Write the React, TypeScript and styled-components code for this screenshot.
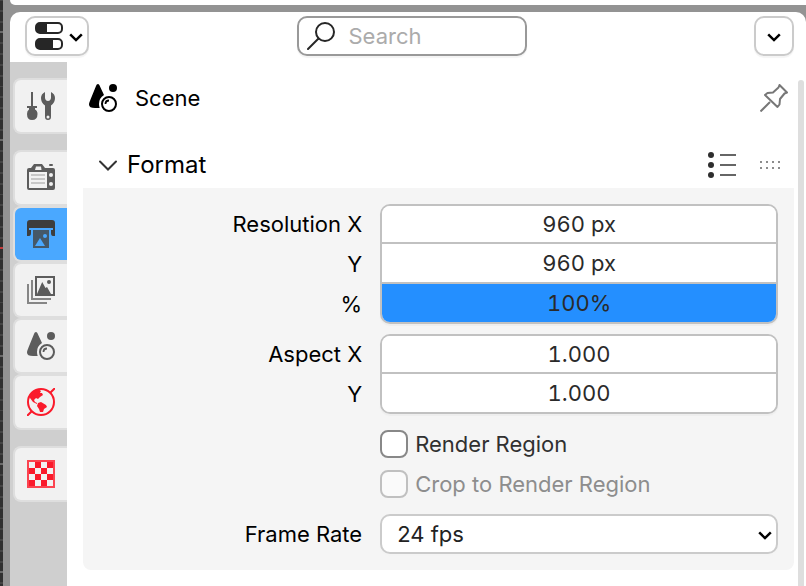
import React from "react";
import styled, { createGlobalStyle, css } from "styled-components";

const GlobalStyle = createGlobalStyle`
  *, *::before, *::after { box-sizing: border-box; }
  html, body, #root { height: 100%; }
  body {
    margin: 0;
    overflow: hidden;
    background: #939393;
    color: #000;
    font-family: Inter, "Liberation Sans", sans-serif;
    font-size: 22px;
    line-height: 28px;
  }
  button, input, select { font: inherit; color: inherit; margin: 0; }
  svg { display: block; flex: none; }
`;

const Workspace = styled.div`
  display: flex;
  height: 100vh;
`;

const Viewport = styled.div`
  flex: none;
  width: 3px;
  background:
    linear-gradient(#c23a3a, #c23a3a) 0 247px / 3px 2px no-repeat,
    repeating-linear-gradient(transparent 0 31px, #6a6a6a 31px 33px, transparent 33px 108px),
    repeating-linear-gradient(
      #444 0 1px, #303030 1px 10px, #444 10px 12px, #303030 12px 21px, #444 21px 23px,
      #303030 23px 32px, #444 32px 33px, #303030 33px 42px, #444 42px 44px, #303030 44px 53px, #444 53px 54px
    );
`;

const Areas = styled.div`
  flex: 1;
  min-width: 0;
  display: flex;
  flex-direction: column;
  gap: 7px;
  padding-left: 7px;
`;

const UpperArea = styled.div`
  flex: none;
  height: 5px;
  background: #fff;
  border-bottom-left-radius: 10px;
`;

const Editor = styled.main`
  flex: 1;
  min-height: 0;
  display: flex;
  flex-direction: column;
  background: #fff;
  border-radius: 10px 10px 0 0;
  overflow: hidden;
`;

const Header = styled.header`
  flex: none;
  display: flex;
  justify-content: space-between;
  align-items: center;
  height: 50px;
  padding: 4px 12px 6px 15px;
`;

const framed = css`
  height: 40px;
  border: 2px solid #cbcbcb;
  border-radius: 10px;
  background: #fff;
  box-shadow: 0 2px 1px #f4f4f4;
`;

const HeaderButton = styled.button<{ $wide?: boolean }>`
  ${framed}
  display: flex;
  align-items: center;
  justify-content: ${(p) => (p.$wide ? "space-between" : "center")};
  width: ${(p) => (p.$wide ? 64 : 40)}px;
  padding: ${(p) => (p.$wide ? "0 4px 0 8px" : "0")};
`;

const SearchBox = styled.label`
  ${framed}
  border-color: #999;
  display: flex;
  align-items: center;
  gap: 14px;
  width: 230px;
  margin-right: 20px;
  padding: 0 8px;
`;

const SearchInput = styled.input`
  flex: 1;
  min-width: 0;
  padding: 0;
  border: 0;
  outline: 0;
  background: none;
  &::placeholder { color: #ababab; opacity: 1; }
`;

const Columns = styled.div`
  flex: 1;
  min-height: 0;
  display: flex;
`;

const TabStrip = styled.nav`
  flex: none;
  display: flex;
  flex-direction: column;
  gap: 16px;
  width: 57px;
  padding: 16px 0 0 3px;
  background: #cfcfcf;
`;

const TabGroup = styled.div`
  display: flex;
  flex-direction: column;
`;

const Tab = styled.button<{ $active?: boolean; $accent?: boolean }>`
  display: flex;
  align-items: center;
  height: 56px;
  padding: 0 0 0 12px;
  border: 2px solid #dedede;
  border-right: 0;
  border-radius: 8px 0 0 8px;
  background: ${(p) => (p.$active ? "#4aa8ff" : "#f1f1f1")};
  color: ${(p) => (p.$accent ? "#fa1a2b" : p.$active ? "#3d3d3d" : "#5c5c5c")};
`;

const Content = styled.section`
  flex: 1;
  min-width: 0;
  padding: 16px 3px 16px 16px;
`;

const Context = styled.div`
  display: flex;
  align-items: center;
  height: 40px;
  padding: 0 6px;
`;

const ContextName = styled.span`
  flex: 1;
  margin-left: 18px;
`;

const IconButton = styled.button`
  display: flex;
  padding: 0;
  border: 0;
  background: none;
`;

const PanelHeader = styled.div`
  display: flex;
  align-items: center;
  gap: 21px;
  height: 46px;
  margin-top: 24px;
  padding: 0 12px 0 15px;
  font-size: 24px;
`;

const PanelToggle = styled.button`
  flex: 1;
  display: flex;
  align-items: center;
  gap: 9px;
  padding: 0;
  border: 0;
  background: none;
  text-align: left;
`;

const PanelBody = styled.div`
  display: flex;
  flex-direction: column;
  padding: 16px;
  border-radius: 0 0 8px 8px;
  background: #f5f5f5;
`;

const Row = styled.div`
  display: grid;
  grid-template-columns: 2fr 3fr;
  column-gap: 16px;
  align-items: center;
`;

const Group = styled(Row)`
  margin-bottom: 10px;
`;

const Labels = styled.div`
  display: flex;
  flex-direction: column;
`;

const FieldLabel = styled.label`
  height: 40px;
  padding-right: 2px;
  line-height: 40px;
  text-align: right;
`;

const FieldStack = styled.div`
  display: flex;
  flex-direction: column;
  border: 2px solid #c1c1c1;
  border-radius: 10px;
  overflow: hidden;
  box-shadow: 0 2px 1px #eeeeee;
`;

const ValueInput = styled.input<{ $filled?: boolean }>`
  width: 100%;
  height: 40px;
  padding: 0;
  border: 0;
  border-top: 2px solid #c1c1c1;
  border-radius: 0;
  outline: 0;
  background: ${(p) => (p.$filled ? "#248fff" : "#fff")};
  color: #2a2a2a;
  text-align: center;
  font-variant-numeric: tabular-nums;
  &:first-child { height: 36px; border-top: 0; }
`;

const CheckLabel = styled.label<{ $muted?: boolean }>`
  grid-column: 2;
  display: flex;
  align-items: center;
  gap: 7px;
  height: 40px;
  color: ${(p) => (p.$muted ? "#8d8d8d" : "#303030")};
`;

const CheckInput = styled.input`
  appearance: none;
  width: 28px;
  height: 28px;
  border: 2px solid #888;
  border-radius: 8px;
  background: #fff;
  &:disabled { border-color: #c0c0c0; background: #fafafa; }
`;

const SelectRow = styled(Row)`
  margin-top: 10px;
`;

const SelectFrame = styled.div`
  display: grid;
  align-items: center;
  & > * { grid-area: 1 / 1; }
  & > svg { justify-self: end; margin-right: 6px; pointer-events: none; }
`;

const Select = styled.select`
  ${framed}
  appearance: none;
  width: 100%;
  padding: 0 40px 0 15px;
  outline: 0;
  color: #222;
`;

const ScrollTrack = styled.div`
  flex: none;
  width: 9px;
  padding: 18px 2px 0 1px;
`;

const ScrollThumb = styled.div`
  height: 100%;
  border-radius: 3px 3px 0 0;
  background: #dedede;
`;

const Chevron = () => (
  <svg width="14" height="12" viewBox="0 0 14 12" fill="none" stroke="#000" strokeWidth="2.5" aria-hidden>
    <path d="M1.2 4.4 7 10.1 12.8 4.4" />
  </svg>
);

const DisclosureIcon = () => (
  <svg width="20" height="12" viewBox="0 0 20 12" fill="none" stroke="#333" strokeWidth="2" strokeLinecap="round" aria-hidden>
    <path d="M2 2.5 10 10.5 18 2.5" />
  </svg>
);

const PropertiesIcon = () => (
  <svg width="28" height="28" viewBox="0 0 28 28" aria-hidden>
    <g fill="none" stroke="#262626" strokeWidth="2">
      <rect x="1" y="1" width="26" height="10" rx="4" />
      <rect x="1" y="17" width="26" height="10" rx="4" />
    </g>
    <path fill="#262626" d="M4 1H12V11H4Q1 11 1 7V5Q1 1 4 1ZM4 17H18V27H4Q1 27 1 23V21Q1 17 4 17Z" />
  </svg>
);

const SearchIcon = () => (
  <svg width="28" height="28" viewBox="0 0 28 28" fill="none" stroke="#262626" strokeWidth="2" strokeLinecap="round" aria-hidden>
    <circle cx="18" cy="10" r="9" />
    <path d="M11.5 16.5 1 27" />
  </svg>
);

const SceneIcon = () => (
  <svg width="28" height="28" viewBox="0 0 28 28" fill="currentColor" aria-hidden>
    <path d="M9 0C10 0 10.4 1 10.8 2L15 11Q10 14 10 20 10 22 10.7 24H6Q0 24 0 20.5C0 19 1 17 1.5 15.5L7 2C7.5 .8 8 0 9 0Z" />
    <circle cx="24" cy="4" r="4" />
    <circle cx="20" cy="20" r="7" fill="none" stroke="currentColor" strokeWidth="2" />
    <path d="M16.5 20Q16.5 16.5 20 16.5" fill="none" stroke="currentColor" strokeWidth="1.8" />
  </svg>
);

const ToolIcon = () => (
  <svg width="28" height="28" viewBox="0 0 28 28" fill="currentColor" aria-hidden>
    <path d="M4 0H6V14H10V16H8V17.5Q10.5 18.5 10.5 22 10.5 28 5 28 0 28 0 22 0 18.5 2 17.5V16H0V14H4Z" />
    <path fillRule="evenodd" d="M18 0V6Q18.5 9 21 9 23.5 9 24 6V0Q28 2 28 6 28 11 24 13.5V25Q24 28 21 28 18 28 18 25V13.5Q14 11 14 6 14 2 18 0ZM21 23.4A1.5 1.5 0 1 0 21 26.4 1.5 1.5 0 1 0 21 23.4Z" />
  </svg>
);

const RenderIcon = () => (
  <svg width="28" height="28" viewBox="0 0 28 28" fill="currentColor" aria-hidden>
    <path fillRule="evenodd" d="M7 0H15L18 4H26Q28 4 28 6V24Q28 26 26 26H2Q0 26 0 24V6Q0 4 2 4H4ZM9 2.5 8 6H14.500L14 2.500ZM2 8V24H20V8ZM24 9A2 2 0 1 0 24 13 2 2 0 1 0 24 9ZM24 18A2 2 0 1 0 24 22 2 2 0 1 0 24 18Z" />
    <rect x="22" y="0" width="4" height="2" rx="1" />
    <path d="M4 11H18M4 15H18M4 19H18" stroke="#c7c7c7" strokeWidth="2" />
  </svg>
);

const OutputIcon = () => (
  <svg width="28" height="28" viewBox="0 0 28 28" aria-hidden>
    <path fill="currentColor" d="M3 0H25Q28 0 28 3V16H26Q24 16 24 13V10H26V8H2V10H4V13Q4 16 2 16H0V3Q0 0 3 0Z" />
    <path fill="#455869" fillRule="evenodd" d="M6 10H22V28H6ZM18 14A2 2 0 1 0 18 18 2 2 0 1 0 18 14ZM13 18 8 26H18Z" />
  </svg>
);

const ViewLayerIcon = () => (
  <svg width="28" height="28" viewBox="0 0 28 28" fill="none" stroke="currentColor" strokeWidth="2" aria-hidden>
    <path d="M1 8V27H20M5 4V23H24" stroke="#858585" />
    <rect x="9" y="1" width="18" height="18" />
    <circle cx="22" cy="6" r="2" fill="currentColor" stroke="none" />
    <path d="M10 18 15.2 6 18.5 12 20 11 24 18Z" fill="currentColor" stroke="none" />
  </svg>
);

const WorldIcon = () => (
  <svg width="28" height="28" viewBox="0 0 28 28" aria-hidden>
    <circle cx="14" cy="14" r="13" fill="none" stroke="currentColor" strokeWidth="2" />
    <path d="M0 28 4.5 23.5M23.5 4.5 28 0" stroke="currentColor" strokeWidth="2" />
    <path fill="currentColor" d="M3 7Q6 2 12 1.5L14 3 13 5H15L16 7 13 9 11 11 9 10 7 12 8 14 10 15 10 16 6 14 3 10ZM11 15 14 14 19 17 20 19 17 21 16 24 13 24 12 21 10 18Z" />
  </svg>
);

const TextureIcon = () => (
  <svg width="28" height="28" viewBox="0 0 28 28" fill="currentColor" aria-hidden>
    <rect x="1" y="1" width="26" height="26" fill="none" stroke="#fb4450" strokeWidth="2" />
    <path d="M8 2H14V8H8ZM20 2H26V8H20ZM2 8H8V14H2ZM14 8H20V14H14ZM8 14H14V20H8ZM20 14H26V20H20ZM2 20H8V26H2ZM14 20H20V26H14Z" />
  </svg>
);

const PinIcon = () => (
  <svg width="28" height="28" viewBox="0 0 28 28" fill="none" stroke="#777" strokeWidth="2" strokeLinejoin="round" aria-hidden>
    <path d="M19.5 1 27 8.5 24.5 9.5 20 15 19.5 20.5 17.5 23 5 11 7.5 9 13 8.5 18.5 3.5ZM10 18 .5 27.5" />
  </svg>
);

const PresetIcon = () => (
  <svg width="30" height="28" viewBox="0 0 30 28" aria-hidden>
    <g fill="#2e2e2e">
      <circle cx="4" cy="4" r="3" />
      <circle cx="4" cy="14" r="3" />
      <circle cx="4" cy="24" r="3" />
    </g>
    <path d="M13 4H29M13 14H29M13 24H29" stroke="#666" strokeWidth="2" />
  </svg>
);

const GripIcon = () => (
  <svg width="24" height="8" viewBox="0 0 24 8" fill="#8c8c8c" aria-hidden>
    {[2, 8, 14, 20].map((x) => (
      <path key={x} d={`M${x} 0h2v2h-2ZM${x} 6h2v2h-2Z`} />
    ))}
  </svg>
);

type TabItem = { name: string; icon: React.ReactNode; active?: boolean; accent?: boolean };

const tabGroups: TabItem[][] = [
  [{ name: "Tool", icon: <ToolIcon /> }],
  [
    { name: "Render", icon: <RenderIcon /> },
    { name: "Output", icon: <OutputIcon />, active: true },
    { name: "View Layer", icon: <ViewLayerIcon /> },
    { name: "Scene", icon: <SceneIcon /> },
    { name: "World", icon: <WorldIcon />, accent: true },
  ],
  [{ name: "Texture", icon: <TextureIcon />, accent: true }],
];

type Field = { id: string; label: string; value: string; filled?: boolean };

const fieldGroups: Field[][] = [
  [
    { id: "res-x", label: "Resolution X", value: "960 px" },
    { id: "res-y", label: "Y", value: "960 px" },
    { id: "res-scale", label: "%", value: "100%", filled: true },
  ],
  [
    { id: "aspect-x", label: "Aspect X", value: "1.000" },
    { id: "aspect-y", label: "Y", value: "1.000" },
  ],
];

export default function App() {
  return (
    <>
      <GlobalStyle />
      <Workspace>
        <Viewport />
        <Areas>
          <UpperArea />
          <Editor>
            <Header>
              <HeaderButton $wide aria-label="Editor type">
                <PropertiesIcon />
                <Chevron />
              </HeaderButton>
              <SearchBox>
                <SearchIcon />
                <SearchInput type="text" placeholder="Search" aria-label="Search" />
              </SearchBox>
              <HeaderButton aria-label="Options">
                <Chevron />
              </HeaderButton>
            </Header>
            <Columns>
              <TabStrip>
                {tabGroups.map((tabs) => (
                  <TabGroup key={tabs[0].name}>
                    {tabs.map((tab) => (
                      <Tab key={tab.name} aria-label={tab.name} $active={tab.active} $accent={tab.accent}>
                        {tab.icon}
                      </Tab>
                    ))}
                  </TabGroup>
                ))}
              </TabStrip>
              <Content>
                <Context>
                  <SceneIcon />
                  <ContextName>Scene</ContextName>
                  <IconButton aria-label="Pin">
                    <PinIcon />
                  </IconButton>
                </Context>
                <PanelHeader>
                  <PanelToggle aria-expanded="true">
                    <DisclosureIcon />
                    Format
                  </PanelToggle>
                  <IconButton aria-label="Presets">
                    <PresetIcon />
                  </IconButton>
                  <GripIcon />
                </PanelHeader>
                <PanelBody>
                  {fieldGroups.map((fields) => (
                    <Group key={fields[0].id}>
                      <Labels>
                        {fields.map((f) => (
                          <FieldLabel key={f.id} htmlFor={f.id}>{f.label}</FieldLabel>
                        ))}
                      </Labels>
                      <FieldStack>
                        {fields.map((f) => (
                          <ValueInput key={f.id} id={f.id} type="text" defaultValue={f.value} $filled={f.filled} />
                        ))}
                      </FieldStack>
                    </Group>
                  ))}
                  <Row>
                    <CheckLabel>
                      <CheckInput type="checkbox" />
                      Render Region
                    </CheckLabel>
                    <CheckLabel $muted>
                      <CheckInput type="checkbox" disabled />
                      Crop to Render Region
                    </CheckLabel>
                  </Row>
                  <SelectRow>
                    <FieldLabel htmlFor="frame-rate">Frame Rate</FieldLabel>
                    <SelectFrame>
                      <Select id="frame-rate" defaultValue="24 fps">
                        <option>24 fps</option>
                        <option>25 fps</option>
                        <option>30 fps</option>
                      </Select>
                      <Chevron />
                    </SelectFrame>
                  </SelectRow>
                </PanelBody>
              </Content>
              <ScrollTrack>
                <ScrollThumb />
              </ScrollTrack>
            </Columns>
          </Editor>
        </Areas>
      </Workspace>
    </>
  );
}
